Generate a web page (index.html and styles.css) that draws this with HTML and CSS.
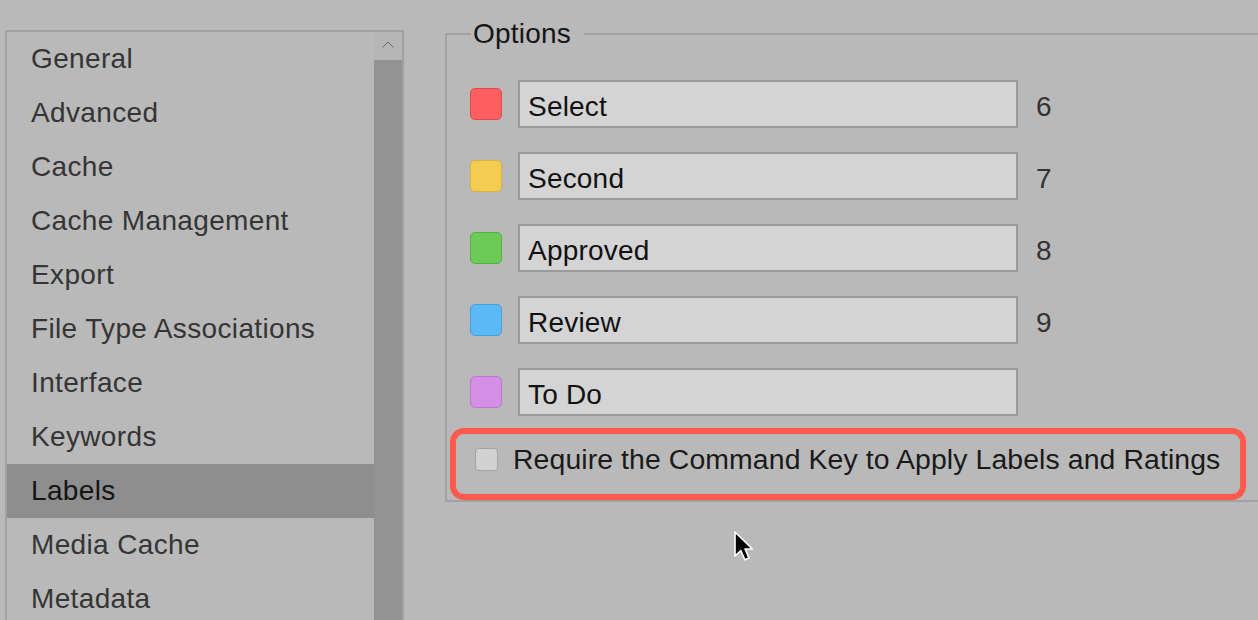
FILE: index.html
```html
<!DOCTYPE html>
<html lang="en">
<head>
    <meta charset="UTF-8">
    <meta name="viewport" content="width=device-width, initial-scale=1.0">
    <title>Preferences - Labels</title>
    <link rel="stylesheet" href="styles.css">
</head>
<body>
    <div class="window">
        <div class="sidebar">
            <ul class="pref-list">
                <li>General</li>
                <li>Advanced</li>
                <li>Cache</li>
                <li>Cache Management</li>
                <li>Export</li>
                <li>File Type Associations</li>
                <li>Interface</li>
                <li>Keywords</li>
                <li class="selected">Labels</li>
                <li>Media Cache</li>
                <li>Metadata</li>
            </ul>
            <div class="scrollbar">
                <div class="scroll-up">
                    <svg width="12" height="7" viewBox="0 0 12 7"><path d="M0.5 6.5 L6 1 L11.5 6.5" fill="none" stroke="#666" stroke-width="1"/></svg>
                </div>
                <div class="scroll-track"></div>
            </div>
        </div>

        <div class="content">
            <fieldset class="options">
                <legend>Options</legend>

                <div class="label-row">
                    <span class="swatch red"></span>
                    <input type="text" class="label-name" value="Select">
                    <span class="shortcut">6</span>
                </div>
                <div class="label-row">
                    <span class="swatch yellow"></span>
                    <input type="text" class="label-name" value="Second">
                    <span class="shortcut">7</span>
                </div>
                <div class="label-row">
                    <span class="swatch green"></span>
                    <input type="text" class="label-name" value="Approved">
                    <span class="shortcut">8</span>
                </div>
                <div class="label-row">
                    <span class="swatch blue"></span>
                    <input type="text" class="label-name" value="Review">
                    <span class="shortcut">9</span>
                </div>
                <div class="label-row">
                    <span class="swatch purple"></span>
                    <input type="text" class="label-name" value="To Do">
                    <span class="shortcut"></span>
                </div>

                <label class="check-row highlight">
                    <input type="checkbox" id="require-cmd">
                    <span>Require the Command Key to Apply Labels and Ratings</span>
                </label>
            </fieldset>
        </div>
    </div>

    <!-- mouse pointer -->
    <svg class="cursor" width="24" height="32" viewBox="0 0 24 32">
        <path d="M2 1 L2 25 L7.8 19.6 L11.8 28.8 L16 27 L12 18 L19.4 18 Z" fill="#000" stroke="#fff" stroke-width="1.6" stroke-linejoin="round"/>
    </svg>
</body>
</html>
```

FILE: styles.css
```css
/* Preferences window, labels pane */
*, *::before, *::after {
    box-sizing: border-box;
}

html, body {
    margin: 0;
    height: 100%;
    overflow: hidden;
}

body {
    font-family: 'Liberation Sans', Arial, sans-serif;
    background-color: #b9b9b9;
    color: #333;
    position: relative;
}

.window {
    display: flex;
    height: 100%;
}

/* left list */
.sidebar {
    display: flex;
    width: 399px;
    margin: 30px 0 0 5px;
    border: 2px solid #a2a2a2;
    border-bottom: none;
    flex-shrink: 0;
    overflow: hidden;
}

.pref-list {
    list-style: none;
    margin: 0;
    padding: 0;
    flex: 1;
}

.pref-list li {
    height: 54px;
    line-height: 54px;
    padding-left: 24px;
    font-size: 28px;
    letter-spacing: 0.35px;
    color: #353535;
}

.pref-list li.selected {
    background-color: #8e8e8e;
    color: #151515;
}

.scrollbar {
    width: 28px;
    display: flex;
    flex-direction: column;
}

.scroll-up {
    height: 28px;
    background-color: #b6b6b6;
    display: flex;
    justify-content: center;
    padding-top: 9px;
}

.scroll-track {
    flex: 1;
    background-color: #939393;
}

/* right pane */
.content {
    flex: 1;
    overflow: hidden;
    padding: 17px 0 0 41px;
}

.options {
    width: 900px;
    margin: 0;
    padding: 29px 0 0 23px;
    border: 2px solid #a2a2a2;
    border-right: none;
}

.options legend {
    font-size: 28px;
    letter-spacing: 0.2px;
    color: #151515;
    padding: 0 13px 0 2px;
    margin-left: 1px;
    line-height: 34px;
}

.label-row {
    display: flex;
    align-items: center;
    height: 48px;
    margin-bottom: 24px;
}

.swatch {
    width: 32px;
    height: 32px;
    border-radius: 5px;
    border: 1px solid;
    margin-right: 16px;
}

.red    { background-color: #ff5f5f; border-color: #e34a4a; }
.yellow { background-color: #f3cd52; border-color: #dbb23c; }
.green  { background-color: #6cca56; border-color: #56b043; }
.blue   { background-color: #5bb9f6; border-color: #45a1dd; }
.purple { background-color: #d590e5; border-color: #bd76cf; }

.label-name {
    width: 500px;
    height: 48px;
    margin: 0;
    padding: 5px 0 0 8px;
    border: 2px solid #9b9b9b;
    background-color: #d4d4d4;
    font-family: inherit;
    font-size: 28px;
    letter-spacing: 0.2px;
    color: #111;
    outline: none;
}

.shortcut {
    margin-left: 18px;
    padding-top: 5px;
    font-size: 28px;
    color: #333;
}

.check-row {
    display: flex;
    align-items: center;
    height: 72px;
    margin-top: -12px;
    padding: 0 0 10px 5px;
    font-size: 28.4px;
    letter-spacing: 0.1px;
    color: #1a1a1a;
    position: relative;
}

.check-row input {
    appearance: none;
    -webkit-appearance: none;
    width: 23px;
    height: 23px;
    margin: 0 15px 0 0;
    border: 1px solid #a3a3a3;
    border-radius: 4px;
    background-color: #d2d2d2;
}

/* red annotation around the checkbox row */
.highlight::after {
    content: "";
    position: absolute;
    left: -20px;
    top: 0;
    width: 796px;
    height: 72px;
    border: 6px solid #ff5a4b;
    border-radius: 14px;
    pointer-events: none;
}

.cursor {
    position: absolute;
    left: 733px;
    top: 531px;
}
```
